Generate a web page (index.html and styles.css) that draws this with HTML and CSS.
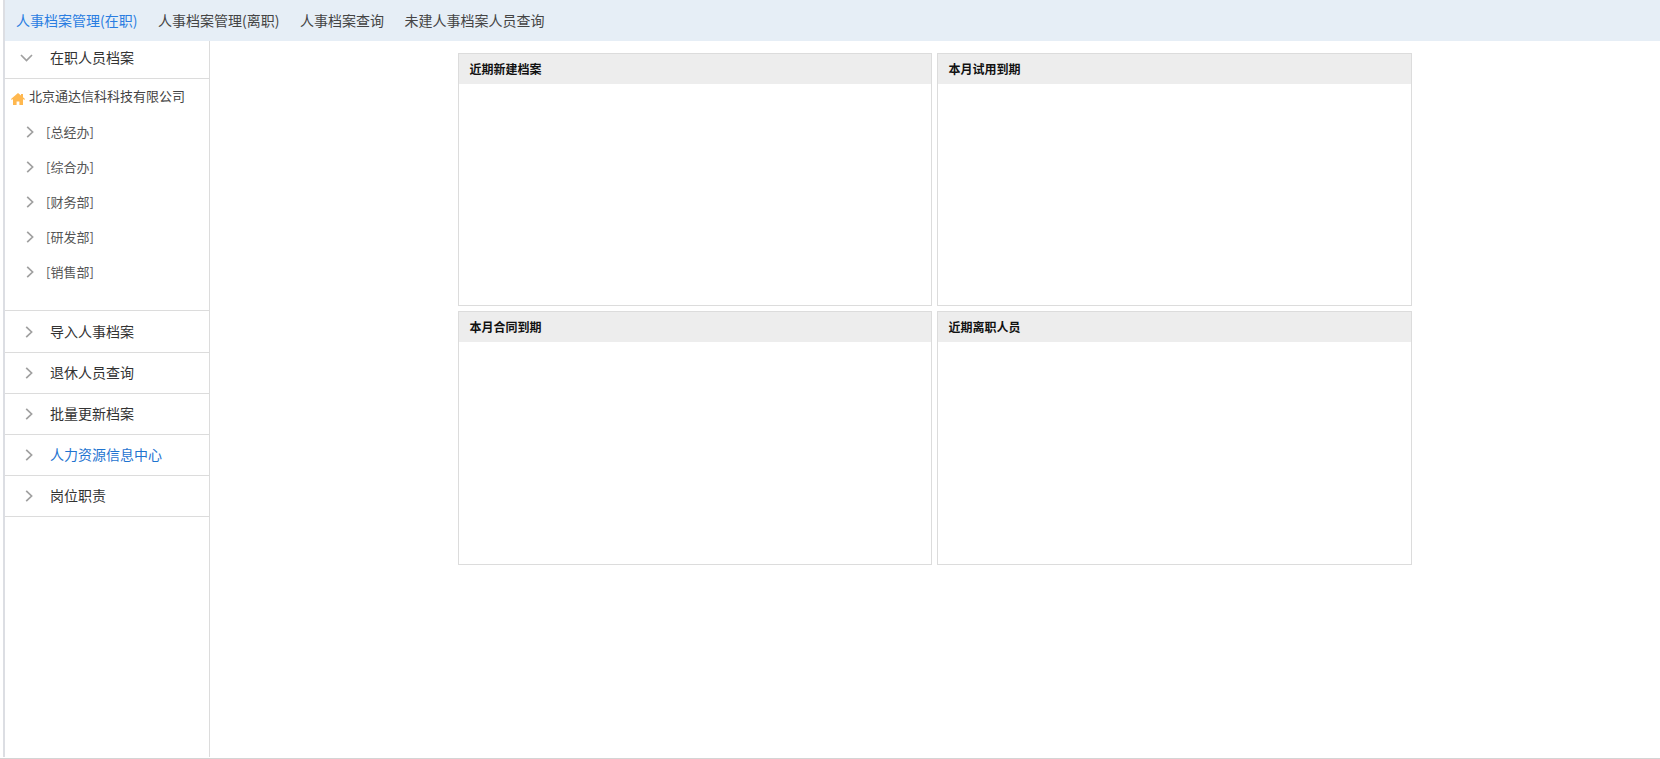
FILE: index.html
```html
<!DOCTYPE html>
<html lang="zh-CN">
<head>
<meta charset="utf-8">
<title>人事档案</title>
<link rel="stylesheet" href="styles.css">
</head>
<body>
<div class="frame">
  <nav class="topbar">
    <a class="tab tab-active">人事档案管理(在职)</a>
    <a class="tab">人事档案管理(离职)</a>
    <a class="tab">人事档案查询</a>
    <a class="tab">未建人事档案人员查询</a>
  </nav>
  <div class="body-row">
    <aside class="sidebar">
      <div class="acc acc-head">
        <svg class="chev chev-down" viewBox="0 0 13 8"><path d="M1 1l5.5 5.5L12 1"/></svg>
        <span>在职人员档案</span>
      </div>
      <div class="tree">
        <div class="tree-root">
          <svg class="house" viewBox="0 0 14 12"><path d="M7 0 0 6l.8 1L2 6v6h3.6V8.4h2.8V12H12V6l1.2 1 .8-1-2-1.7V1h-2v1.6z"/></svg>
          <span>北京通达信科科技有限公司</span>
        </div>
        <div class="tree-item"><svg class="chev" viewBox="0 0 8 12"><path d="M1.2.8 6.6 6l-5.4 5.2"/></svg><span>[总经办]</span></div>
        <div class="tree-item"><svg class="chev" viewBox="0 0 8 12"><path d="M1.2.8 6.6 6l-5.4 5.2"/></svg><span>[综合办]</span></div>
        <div class="tree-item"><svg class="chev" viewBox="0 0 8 12"><path d="M1.2.8 6.6 6l-5.4 5.2"/></svg><span>[财务部]</span></div>
        <div class="tree-item"><svg class="chev" viewBox="0 0 8 12"><path d="M1.2.8 6.6 6l-5.4 5.2"/></svg><span>[研发部]</span></div>
        <div class="tree-item"><svg class="chev" viewBox="0 0 8 12"><path d="M1.2.8 6.6 6l-5.4 5.2"/></svg><span>[销售部]</span></div>
      </div>
      <div class="acc acc-first"><svg class="chev" viewBox="0 0 8 12"><path d="M1.2.8 6.6 6l-5.4 5.2"/></svg><span>导入人事档案</span></div>
      <div class="acc"><svg class="chev" viewBox="0 0 8 12"><path d="M1.2.8 6.6 6l-5.4 5.2"/></svg><span>退休人员查询</span></div>
      <div class="acc"><svg class="chev" viewBox="0 0 8 12"><path d="M1.2.8 6.6 6l-5.4 5.2"/></svg><span>批量更新档案</span></div>
      <div class="acc acc-link"><svg class="chev" viewBox="0 0 8 12"><path d="M1.2.8 6.6 6l-5.4 5.2"/></svg><span>人力资源信息中心</span></div>
      <div class="acc"><svg class="chev" viewBox="0 0 8 12"><path d="M1.2.8 6.6 6l-5.4 5.2"/></svg><span>岗位职责</span></div>
    </aside>
    <main class="main">
      <div class="panels">
        <section class="panel"><h3 class="panel-title">近期新建档案</h3></section>
        <section class="panel"><h3 class="panel-title">本月试用到期</h3></section>
        <section class="panel"><h3 class="panel-title">本月合同到期</h3></section>
        <section class="panel"><h3 class="panel-title">近期离职人员</h3></section>
      </div>
    </main>
  </div>
</div>
<div class="page-line"></div>
</body>
</html>
```

FILE: styles.css
```css
* { box-sizing: border-box; }
html, body { height: 100%; }
body {
  margin: 0;
  background: #fff;
  font-family: "Noto Sans CJK SC", "Liberation Sans", sans-serif;
  font-size: 14px;
  color: #333;
  overflow: hidden;
}
.frame {
  height: 757px;
  margin-left: 3px;
  border-left: 2px solid #dcdee3;
  display: flex;
  flex-direction: column;
}
.page-line {
  height: 1px;
  margin-top: 1px;
  background: #d4d4d4;
}
.topbar {
  height: 41px;
  flex: none;
  background: #e6eef6;
  display: flex;
  align-items: center;
  padding: 0 0 2px 11px;
  gap: 20.5px;
  line-height: 20px;
}
.tab { color: #444; white-space: nowrap; }
.tab-active { color: #2a7de1; }
.body-row { flex: 1; display: flex; min-height: 0; }
.sidebar {
  width: 205px;
  flex: none;
  border-right: 1px solid #dcdcdc;
}
.acc {
  height: 41px;
  display: flex;
  align-items: center;
  border-bottom: 1px solid #dcdcdc;
  color: #333;
}
.acc-head { height: 38px; padding-bottom: 3px; }
.acc-first { height: 42px; }
.acc-link { color: #1f74d0; }
.acc span { line-height: 20px; margin-bottom: 2px; }
.acc .chev { margin-left: 20px; margin-right: 17px; }
.acc .chev-down { margin-left: 15px; margin-right: 17px; }
.chev {
  width: 8px;
  height: 12px;
  flex: none;
  fill: none;
  stroke: #a0a0a0;
  stroke-width: 1.7;
}
.chev-down { width: 13px; height: 8px; }
.tree {
  height: 232px;
  border-bottom: 1px solid #dcdcdc;
  font-size: 13px;
}
.tree-root {
  height: 35px;
  display: flex;
  align-items: center;
  padding-left: 6px;
  color: #444;
}
.tree-root span { margin-bottom: 2px; }
.house {
  width: 14px;
  height: 12px;
  fill: #ffb84f;
  margin-right: 4px;
  margin-top: 5px;
  flex: none;
}
.tree-item {
  height: 35px;
  display: flex;
  align-items: center;
  padding-left: 21px;
  color: #555;
}
.tree-item .chev { margin-right: 12px; }
.main { flex: 1; padding-top: 12px; }
.panels {
  width: 954px;
  margin: 0 auto;
  display: grid;
  grid-template-columns: 474px 475px;
  grid-template-rows: 253px 254px;
  gap: 5px;
}
.panel { border: 1px solid #dcdcdc; }
.panel-title {
  margin: 0;
  height: 30px;
  background: #ededed;
  font-size: 12px;
  font-weight: 700;
  line-height: 30px;
  padding-left: 10.5px;
  color: #111;
}
```
